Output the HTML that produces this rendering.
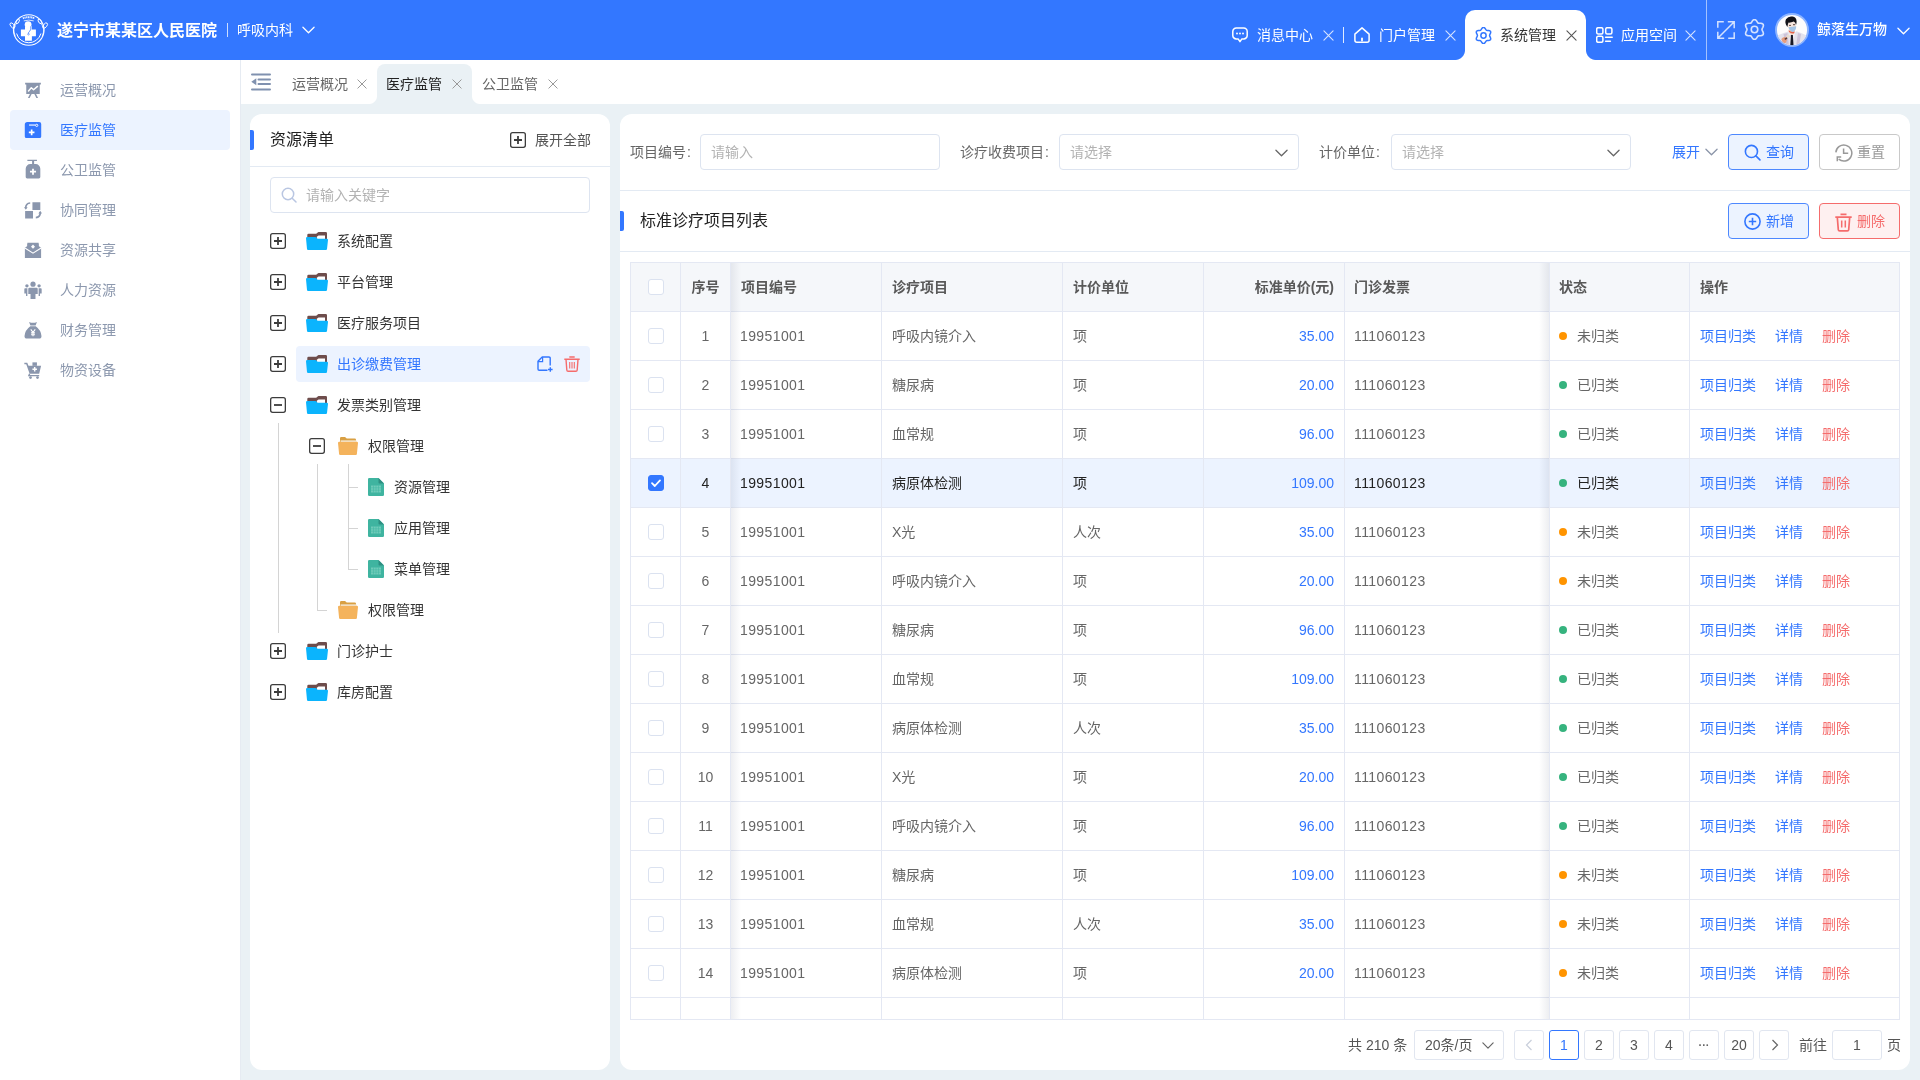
<!DOCTYPE html>
<html lang="zh-CN">
<head>
<meta charset="utf-8">
<title>系统管理 - 医疗监管</title>
<style>
*{box-sizing:border-box;margin:0;padding:0}
html,body{width:1920px;height:1080px;overflow:hidden}
body{position:relative;background:#eaf1f5;font-family:"Liberation Sans","Noto Sans CJK SC",sans-serif;font-size:14px;color:#333;line-height:20px}
.abs{position:absolute}
#hd,#sb,#tb,.panel{will-change:transform}
svg{display:block}
/* ---------- header ---------- */
#hd{position:absolute;left:0;top:0;width:1920px;height:60px;background:#3377ff;color:#fff}
#hd .logo{position:absolute;left:9px;top:11px}
#hd .title{position:absolute;left:57px;top:19px;font-size:16px;font-weight:700;line-height:24px;white-space:nowrap}
#hd .vbar{position:absolute;left:227px;top:23px;width:1px;height:14px;background:rgba(255,255,255,.75)}
#hd .dept{position:absolute;left:237px;top:20px;font-size:14px;line-height:20px;white-space:nowrap}
#hd .dchev{position:absolute;left:302px;top:26px}
.htab{position:absolute;top:10px;height:50px;width:121px;color:#fff;white-space:nowrap}
.htab .ic{position:absolute;left:10px;top:17px}
.htab .tx{position:absolute;left:35px;top:15px;line-height:20px;font-size:14px}
.htab .cx{position:absolute;left:101px;top:20px}
.htab.on{background:#fff;color:#333;border-radius:10px 10px 0 0}
.htab.on:before,.htab.on:after{content:"";position:absolute;bottom:0;width:10px;height:10px}
.htab.on:before{left:-10px;background:radial-gradient(circle at 0 0,rgba(255,255,255,0) 9.5px,#fff 10.5px)}
.htab.on:after{right:-10px;background:radial-gradient(circle at 100% 0,rgba(255,255,255,0) 9.5px,#fff 10.5px)}
#hd .sep{position:absolute;left:1706px;top:0;width:1px;height:60px;background:rgba(255,255,255,.55)}
#hd .tsep{position:absolute;left:1343px;top:27px;width:1px;height:16px;background:rgba(255,255,255,.85)}
#hd .uname{position:absolute;left:1817px;top:19px;font-size:14px;line-height:20px;font-weight:500;white-space:nowrap}
/* ---------- sidebar ---------- */
#sb{position:absolute;left:0;top:60px;width:241px;height:1020px;background:#fff;border-right:1px solid #e6ebf2}
.mi{position:absolute;left:10px;width:220px;height:40px;border-radius:4px;color:#8c98ae;white-space:nowrap}
.mi .ic{position:absolute;left:14px;top:11px}
.mi .tx{position:absolute;left:50px;top:10px;line-height:20px}
.mi.on{background:#ecf3ff;color:#3377ff}
/* ---------- tab bar ---------- */
#tb{position:absolute;left:241px;top:60px;width:1679px;height:44px;background:#fff}
.ptab{position:absolute;top:4px;height:40px;width:95px;color:#666;white-space:nowrap}
.ptab .tx{position:absolute;left:10px;top:10px;line-height:20px}
.ptab .cx{position:absolute;left:75px;top:15px}
.ptab.on{background:#eaf1f5;color:#222;border-radius:8px 8px 0 0}
.ptab.on:before,.ptab.on:after{content:"";position:absolute;bottom:0;width:8px;height:8px}
.ptab.on:before{left:-8px;background:radial-gradient(circle at 0 0,rgba(234,241,245,0) 7.5px,#eaf1f5 8.5px)}
.ptab.on:after{right:-8px;background:radial-gradient(circle at 100% 0,rgba(234,241,245,0) 7.5px,#eaf1f5 8.5px)}
/* ---------- panels ---------- */
.panel{position:absolute;background:#fff;border-radius:12px}
#lp{left:250px;top:114px;width:360px;height:956px}
#rp{left:620px;top:114px;width:1290px;height:956px}
.bluebar{position:absolute;left:0;width:4px;height:20px;background:#3377ff;border-radius:0 2px 2px 0}
.hline{position:absolute;left:0;height:1px;background:#e3eaf3}

/* ---------- left panel ---------- */
#lp .ttl{position:absolute;left:20px;top:14px;font-size:16px;line-height:24px;color:#222}
#lp .exall{position:absolute;left:285px;top:16px;color:#555;line-height:20px}
.sinp{position:absolute;left:20px;top:63px;width:320px;height:36px;border:1px solid #dde4f0;border-radius:4px;background:#fff}
.sinp span{position:absolute;left:35px;top:7px;color:#b3b3b3;line-height:20px}
.tr{position:absolute;left:0;width:360px;height:36px;white-space:nowrap}
.tr .bx{position:absolute;top:10px}
.tr .fi{position:absolute}
.tr .tx{position:absolute;top:8px;line-height:20px;color:#333}
.tr .sel{position:absolute;left:46px;top:0;width:294px;height:36px;border-radius:4px;background:#ecf3ff}
.tl{position:absolute;background:#d4d4d4}

/* ---------- right panel ---------- */
.cl{font-style:normal;margin-left:1px}
.flb{position:absolute;top:28px;line-height:20px;color:#666;white-space:nowrap}
.finp{position:absolute;top:20px;width:240px;height:36px;border:1px solid #dde4f0;border-radius:4px;background:#fff}
.finp span{position:absolute;left:10px;top:7px;line-height:20px;color:#b3b3b3}
.finp svg{position:absolute;right:10px;top:14px;color:#666}
.btn{position:absolute;width:81px;height:36px;border-radius:4px;border:1px solid #4d88ff;background:#ecf3ff;color:#3377ff;white-space:nowrap}
.btn svg{position:absolute;left:15px;top:9px}
.btn span{position:absolute;left:37px;top:7px;line-height:20px}
.btn.gray{border-color:#c9c9c9;background:#fff;color:#999}
.btn.red{border-color:#f56c6c;background:#fef0f0;color:#f56c6c}
#rp .ttl{position:absolute;left:20px;top:95px;font-size:16px;line-height:24px;color:#222}
/* table */
#tbl{position:absolute;left:10px;top:148px;width:1270px;height:758px;overflow:hidden;border:1px solid #e4e8f3;border-right:none;background:#fff}
#tbl table{border-collapse:separate;border-spacing:0;table-layout:fixed;width:1269px}
#tbl th,#tbl td{height:49px;border-right:1px solid #e4e8f3;border-bottom:1px solid #e4e8f3;padding:0 10px;text-align:left;white-space:nowrap;overflow:hidden;line-height:20px;font-size:14px}
#tbl th{background:#f5f7fa;color:#595959;font-weight:700}
#tbl th.s{padding-left:9px}
#tbl td{color:#666}
#tbl .n{letter-spacing:.4px;padding-left:9px}
#tbl .c{text-align:center;padding:0}
#tbl .r{text-align:right}
#tbl td.pr{color:#3377ff}
#tbl tr.sel td{background:#ecf3ff;color:#222}
#tbl tr.sel td.pr{color:#3377ff}
.cb{display:inline-block;width:16px;height:16px;border:1px solid #dbe2f0;border-radius:3px;background:#fff;vertical-align:middle;position:relative;top:-1px}
.cb.on{background:#3377ff;border-color:#3377ff}
.dot{display:inline-block;width:8px;height:8px;border-radius:50%;margin:0 10px 0 -1px;position:relative;top:-1px}
.dot.o{background:#ff9400}
.dot.g{background:#36b37e}
.lk{color:#3377ff;margin-right:19px}
.lk.d{color:#f56c6c;margin-right:0}
.shl{position:absolute;left:100px;top:0;width:10px;height:758px;background:linear-gradient(90deg,rgba(60,70,100,.09),rgba(60,70,100,0));pointer-events:none}
.shr{position:absolute;left:908px;top:0;width:10px;height:758px;background:linear-gradient(270deg,rgba(60,70,100,.09),rgba(60,70,100,0));pointer-events:none}
/* pagination */
#pg{position:absolute;left:0;top:916px;width:1290px;height:30px;color:#555;line-height:30px;white-space:nowrap}
#pg .pb{position:absolute;top:0;width:30px;height:30px;border:1px solid #e1e6f0;border-radius:3px;text-align:center;line-height:28px;color:#555;background:#fff}
#pg .pb.on{border-color:#3377ff;color:#3377ff}
#pg .t{position:absolute;top:0}
</style>
</head>
<body>
<!-- HEADER -->
<div id="hd">
  <svg class="logo" width="40" height="38" viewBox="0 0 40 38">
    <g fill="none" stroke="#fff">
      <circle cx="19.750" cy="19" r="15.300" stroke-width="1.100"/>
      <path d="M7.600 22.500A12.600 12.600 0 0 0 31.900 22.500" stroke-width="1"/>
      <path d="M13.800 7.300Q19.750 5 25.700 7.300" stroke-width="2" stroke-dasharray="1.200 .5" opacity=".9"/>
      <path d="M14.800 9.900Q19.750 8.300 24.700 9.900" stroke-width=".8"/>
      <ellipse cx="3.300" cy="14.500" rx="1.700" ry="3" transform="rotate(-38 3.300 14.500)" stroke-width=".9"/>
      <ellipse cx="8.700" cy="10.300" rx="1.300" ry="2.400" transform="rotate(32 8.700 10.300)" stroke-width=".9"/>
      <path d="M4.800 16.500Q4.300 21 6.300 25.500M7.600 12Q5.800 14.500 5.300 17.500" stroke-width=".8"/>
      <ellipse cx="36.200" cy="14.500" rx="1.700" ry="3" transform="rotate(38 36.200 14.500)" stroke-width=".9"/>
      <ellipse cx="30.800" cy="10.300" rx="1.300" ry="2.400" transform="rotate(-32 30.800 10.300)" stroke-width=".9"/>
      <path d="M34.700 16.500Q35.200 21 33.200 25.500M31.900 12Q33.700 14.500 34.200 17.500" stroke-width=".8"/>
    </g>
    <path d="M16 15.200h6.900v3.300h4v6.800h-4v4.400H16v-4.400h-4.100v-6.800H16Z" fill="#fff"/>
    <circle cx="19.100" cy="13.600" r="3.400" fill="#fff"/>
    <path d="M21.800 15.300Q22.600 18.500 20.600 20.300Q19.200 21.600 19.400 22.600" fill="none" stroke="#3377ff" stroke-width=".8"/>
    <circle cx="19.500" cy="23.200" r=".8" fill="#fff" stroke="#3377ff" stroke-width=".6"/>
  </svg>
    <div class="title">遂宁市某某区人民医院</div>
  <div class="vbar"></div>
  <div class="dept">呼吸内科</div>
  <svg class="dchev" width="13" height="8" viewBox="0 0 14 8"><path d="M1 1L7 7L13 1" fill="none" stroke="currentColor" stroke-width="1.4" stroke-linecap="round" stroke-linejoin="round"/></svg>
  <div class="htab" style="left:1222px">
    <svg class="ic" width="16" height="16" viewBox="0 0 16 16"><path d="M4.300 .9h7.400a3.500 3.500 0 0 1 3.500 3.500v4a3.500 3.500 0 0 1-3.500 3.500H9.900L8 14.700 6.100 11.900H4.300A3.500 3.500 0 0 1 .8 8.400V4.400A3.500 3.500 0 0 1 4.300 .9Z" fill="none" stroke="#fff" stroke-width="1.500" stroke-linejoin="round"/><circle cx="5" cy="6.500" r=".95" fill="#fff"/><circle cx="8" cy="6.500" r=".95" fill="#fff"/><circle cx="11" cy="6.500" r=".95" fill="#fff"/></svg>
    <span class="tx">消息中心</span>
    <svg class="cx" width="11" height="11" style="color:rgba(255,255,255,.8)" viewBox="0 0 12 12"><path d="M1 1L11 11M11 1L1 11" fill="none" stroke="currentColor" stroke-width="1.2" stroke-linecap="round"/></svg>
  </div>
  <div class="tsep"></div>
  <div class="htab" style="left:1344px">
    <svg class="ic" width="16" height="16" viewBox="0 0 16 16"><path d="M8 .9L15.100 7.100V13.200a2 2 0 0 1-2 2H2.900a2 2 0 0 1-2-2V7.100Z" fill="none" stroke="#fff" stroke-width="1.500" stroke-linejoin="round"/><path d="M8 11.300v2.200" stroke="#fff" stroke-width="1.800" stroke-linecap="round"/></svg>
    <span class="tx">门户管理</span>
    <svg class="cx" width="11" height="11" style="color:rgba(255,255,255,.8)" viewBox="0 0 12 12"><path d="M1 1L11 11M11 1L1 11" fill="none" stroke="currentColor" stroke-width="1.2" stroke-linecap="round"/></svg>
  </div>
  <div class="htab on" style="left:1465px">
    <svg class="ic" width="17" height="17" style="color:#3377ff;stroke-width:1.750;left:9.500px;top:16.500px" viewBox="0 0 20 20"><path d="M17.1 10.0L17.4 9.0L18.0 7.9L18.5 6.5L18.3 5.2L17.3 4.4L15.9 4.1L14.5 4.1L13.5 3.9L12.8 3.1L12.1 2.0L11.2 0.9L10.0 0.4L8.8 0.9L7.9 2.0L7.2 3.1L6.5 3.9L5.5 4.1L4.1 4.1L2.7 4.4L1.7 5.2L1.5 6.5L2.0 7.9L2.6 9.0L2.9 10.0L2.6 11.0L2.0 12.1L1.5 13.5L1.7 14.8L2.7 15.6L4.1 15.9L5.5 15.9L6.5 16.1L7.2 16.9L7.9 18.0L8.8 19.1L10.0 19.6L11.2 19.1L12.1 18.0L12.8 16.9L13.5 16.1L14.5 15.9L15.9 15.9L17.3 15.6L18.3 14.8L18.5 13.5L18.0 12.1L17.4 11.0Z" fill="none" stroke="currentColor" stroke-linejoin="round"/><circle cx="10" cy="10" r="3.1" fill="none" stroke="currentColor"/></svg>
    <span class="tx">系统管理</span>
    <svg class="cx" width="11" height="11" style="color:#555" viewBox="0 0 12 12"><path d="M1 1L11 11M11 1L1 11" fill="none" stroke="currentColor" stroke-width="1.2" stroke-linecap="round"/></svg>
  </div>
  <div class="htab" style="left:1586px">
    <svg class="ic" width="17" height="16" viewBox="0 0 17 16"><rect x=".7" y=".7" width="6.200" height="6.200" rx="1.500" fill="none" stroke="#fff" stroke-width="1.500"/><rect x="9.700" y=".7" width="6.200" height="6.200" rx="1.500" fill="none" stroke="#fff" stroke-width="1.500"/><rect x=".7" y="9.300" width="6.200" height="6" rx="1.500" fill="none" stroke="#fff" stroke-width="1.500"/><path d="M9.600 10.300h6.600M9.600 14.300h4.800" stroke="#fff" stroke-width="1.500" stroke-linecap="round"/></svg>
    <span class="tx">应用空间</span>
    <svg class="cx" width="11" height="11" style="left:99px;color:rgba(255,255,255,.8)" viewBox="0 0 12 12"><path d="M1 1L11 11M11 1L1 11" fill="none" stroke="currentColor" stroke-width="1.2" stroke-linecap="round"/></svg>
  </div>
  <svg class="abs" style="left:1717px;top:21px;color:#d4e2ff" width="18" height="18" viewBox="0 0 18 18"><path d="M.8 6.800V.8H6.800M11.200 17.200h6V11.200M10.800.8h6.400v6.400M17 1L1 17M.8 10.800v6.400h6.400" fill="none" stroke="currentColor" stroke-width="1.500"/></svg>
  <svg class="abs" style="left:1744px;top:19px;color:#d4e2ff;stroke-width:1.550" width="21" height="21" viewBox="0 0 20 20"><path d="M17.1 10.0L17.4 9.0L18.0 7.9L18.5 6.5L18.3 5.2L17.3 4.4L15.9 4.1L14.5 4.1L13.5 3.9L12.8 3.1L12.1 2.0L11.2 0.9L10.0 0.4L8.8 0.9L7.9 2.0L7.2 3.1L6.5 3.9L5.5 4.1L4.1 4.1L2.7 4.4L1.7 5.2L1.5 6.5L2.0 7.9L2.6 9.0L2.9 10.0L2.6 11.0L2.0 12.1L1.5 13.5L1.7 14.8L2.7 15.6L4.1 15.9L5.5 15.9L6.5 16.1L7.2 16.9L7.9 18.0L8.8 19.1L10.0 19.6L11.2 19.1L12.1 18.0L12.8 16.9L13.5 16.1L14.5 15.9L15.9 15.9L17.3 15.6L18.3 14.8L18.5 13.5L18.0 12.1L17.4 11.0Z" fill="none" stroke="currentColor" stroke-linejoin="round"/><circle cx="10" cy="10" r="3.1" fill="none" stroke="currentColor"/></svg>
  <svg class="abs" style="left:1775px;top:13px" width="34" height="34" viewBox="0 0 34 34">
    <clipPath id="avc"><circle cx="17" cy="17" r="15.200"/></clipPath>
    <circle cx="17" cy="17" r="16" fill="#fefcfc" stroke="#8db4ff" stroke-width="1.900"/>
    <g clip-path="url(#avc)">
      <path d="M2 34L3 22.300Q8 20 13 18.500L17 21.500L21.500 18.200Q27 20 31 22.300L32.500 34Z" fill="#e4e2ec"/>
      <path d="M8.500 21L11 33H14L12.500 20ZM23 20L21 33H24L26 21Z" fill="#c3b6d2" opacity=".7"/>
      <path d="M13.500 19L16.800 33L20.600 19Z" fill="#f1eef4"/>
      <path d="M13.700 16.500H19.600L19.400 20L16.800 22.300L14.200 20Z" fill="#f2cbb8"/>
      <path d="M13.600 17.200Q16.500 19.800 19.500 18.200L19.300 20.300Q16.300 20.800 13.800 18.800Z" fill="#e5624b"/>
      <path d="M15.900 22L17.900 22L18.500 32.500L15.300 32.500Z" fill="#191926"/>
      <path d="M12.500 9Q16 7.500 20.500 8.500Q21.500 12 20.800 15L17 17L13.200 15Z" fill="#f7e6de"/>
      <ellipse cx="15" cy="12.300" rx=".9" ry=".65" fill="#3a2320"/><ellipse cx="19" cy="11.700" rx=".9" ry=".65" fill="#3a2320"/>
      <path d="M13.400 14.300Q17.500 13.800 21.200 13.200Q21.300 17.300 18 18.900Q14.800 18.600 13.400 14.300Z" fill="#a6c5e6"/>
      <path d="M12 13.500Q9.300 9.500 11 6.200Q13.500 2.800 17.500 3.600Q21.500 4.300 21.600 8.600Q21.700 10.500 21 12Q20.600 9 18.800 8.500Q15.800 9.800 13.400 9.600Q12.800 11.500 12.600 13.800Z" fill="#131218"/>
      <circle cx="13.100" cy="23.300" r="1.800" fill="#e9dccf"/>
      <path d="M6.300 26Q8.500 23 11.800 24.500Q12.500 27 11 29.500Q9 30.500 7.500 29.500Z" fill="#e59e80"/>
      <path d="M9.500 25.500L12 24.300L12.300 25.800L10 27Z" fill="#5a3a36"/>
    </g>
  </svg>
  <svg class="abs" style="left:1897px;top:27px" width="13" height="8" viewBox="0 0 14 8"><path d="M1 1L7 7L13 1" fill="none" stroke="currentColor" stroke-width="1.4" stroke-linecap="round" stroke-linejoin="round"/></svg>
  <div class="sep"></div>
  <div class="uname">鲸落生万物</div>
</div>
<!-- SIDEBAR -->
<div id="sb">
  <div class="mi" style="top:10px"><svg class="ic" width="18" height="18" viewBox="0 0 16 16" fill="#8a96ad" style="color:#8a96ad"><path d="M1 1.500h14v1.600H1ZM2 3.100h12v8.400H2ZM5.300 11.500h1.500L5 15H3.500ZM9.200 11.500h1.500L12.500 15H11Z"/><path d="M4 8.800L6.500 6L8.500 7.800L12 4.800" fill="none" stroke="#fff" stroke-width="1.300" stroke-linejoin="round" stroke-linecap="round"/></svg><span class="tx">运营概况</span></div>
  <div class="mi on" style="top:50px"><svg class="ic" width="18" height="18" viewBox="0 0 16 16" fill="#3377ff" style="color:#3377ff"><path d="M3 .9h10.500a1.800 1.800 0 0 1 1.800 1.800V13.800a1.400 1.400 0 0 1-1.400 1.400H2.100A1.400 1.400 0 0 1 .7 13.800V3.200A2.300 2.300 0 0 1 3 .9Z"/><path d="M4.500 3.600H10.300" stroke="#fff" stroke-width="1" fill="none"/><circle cx="11.300" cy="3.900" r="1" fill="none" stroke="#fff" stroke-width=".8"/><path d="M6.800 7.600v5M4.300 10.100h5" stroke="#fff" stroke-width="1.500" fill="none"/></svg><span class="tx">医疗监管</span></div>
  <div class="mi" style="top:90px"><svg class="ic" width="18" height="18" viewBox="0 0 16 16" overflow="visible" fill="#8a96ad" style="color:#8a96ad"><path d="M3 -1.200h8.500v1.300H9v2.600h1.300a4.200 4.200 0 0 1 4.200 4.200V14.300a1.300 1.300 0 0 1-1.300 1.300H2.800a1.300 1.300 0 0 1-1.300-1.300V6.900a4.200 4.200 0 0 1 4.200-4.200H7.200V.1H3Z"/><path d="M8 6.800v5.400M5.300 9.500h5.400" stroke="#fff" stroke-width="1.600" fill="none"/></svg><span class="tx">公卫监管</span></div>
  <div class="mi" style="top:130px"><svg class="ic" width="18" height="18" viewBox="0 0 16 16" fill="#8a96ad" style="color:#8a96ad"><path d="M7.500 1h7v7h-7ZM1 8.800h7v6.700H1Z"/><path d="M1.500 6.500Q1.500 2 5.500 1.800M14.500 10Q14.500 14.500 10.500 14.700" fill="none" stroke="currentColor" stroke-width="1.500"/><path d="M0 5.500h3.200L1.600 7.800ZM16 11h-3.200L14.400 8.700Z"/></svg><span class="tx">协同管理</span></div>
  <div class="mi" style="top:170px"><svg class="ic" width="18" height="18" viewBox="0 0 16 16" fill="#8a96ad" style="color:#8a96ad"><path d="M0.800 6L3 4.500V1.500h10v3L15.200 6V15.200H0.800Z"/><path d="M3 2.500h10V8L8 11L3 8Z" fill="currentColor" stroke="#fff" stroke-width="0"/><path d="M0.800 6.200L8 10.800L15.200 6.200" fill="none" stroke="#fff" stroke-width="1"/><path d="M8 3.200L9.800 5L8 6.800L6.200 5Z" fill="#fff"/></svg><span class="tx">资源共享</span></div>
  <div class="mi" style="top:210px"><svg class="ic" width="18" height="18" viewBox="0 0 16 16" fill="#8a96ad" style="color:#8a96ad"><circle cx="8" cy="2.800" r="2.300"/><path d="M4.800 6h6.400a1 1 0 0 1 1 1v4.500h-2V16H5.800v-4.500h-2V7a1 1 0 0 1 1-1Z"/><circle cx="2.600" cy="4.300" r="1.500"/><circle cx="13.400" cy="4.300" r="1.500"/><path d="M1 6.500h2v6.800H1.800V11H.3V7.200a.7.700 0 0 1 .7-.7ZM15 6.500h-2v6.800h1.200V11h1.500V7.200a.7.700 0 0 0-.7-.7Z"/></svg><span class="tx">人力资源</span></div>
  <div class="mi" style="top:250px"><svg class="ic" width="18" height="18" viewBox="0 0 16 16" fill="#8a96ad" style="color:#8a96ad"><path d="M4.500 0.800Q8 2.300 11.500 0.800L10.300 4h-4.600ZM5.600 4.600h4.800Q15 8 15.500 13a2.200 2.200 0 0 1-2.200 2.500H2.700A2.200 2.200 0 0 1 .5 13Q1 8 5.600 4.600Z"/><path d="M6 7.500L8 10L10 7.500M8 10v3.500M6.200 10.500h3.600M6.200 12.200h3.600" fill="none" stroke="#fff" stroke-width="1"/></svg><span class="tx">财务管理</span></div>
  <div class="mi" style="top:290px"><svg class="ic" width="18" height="18" viewBox="0 0 16 16" fill="#8a96ad" style="color:#8a96ad"><path d="M0.300 1.500h2.600L4 4.300h11.200l-1.700 7H5L2 2.800H0.300Z"/><path d="M5 11.300L4.300 13h9.200" fill="none" stroke="currentColor" stroke-width="1.200"/><circle cx="5.800" cy="14.700" r="1.200"/><circle cx="12" cy="14.700" r="1.200"/><path d="M7.500 1.200h4v3.100h-4Z"/><path d="M9.500 5.300v4M7.500 7.300h4" stroke="#fff" stroke-width="1.300" fill="none"/></svg><span class="tx">物资设备</span></div>
</div>
<!-- TAB BAR -->
<div id="tb">
  <svg class="abs" style="left:10px;top:13px" width="20" height="18" viewBox="0 0 20 18"><path d="M1 1.500h18M7.500 6.500h11.500M7.500 11h11.500M1 16.500h18" stroke="#8091af" stroke-width="2" stroke-linecap="round"/><path d="M0.300 8.800L5.300 5.300v7Z" fill="#8091af"/></svg>
  <div class="ptab" style="left:41px"><span class="tx">运营概况</span><svg class="cx" width="10" height="10" style="color:#999" viewBox="0 0 12 12"><path d="M1 1L11 11M11 1L1 11" fill="none" stroke="currentColor" stroke-width="1.2" stroke-linecap="round"/></svg></div>
  <div class="ptab on" style="left:136px"><span class="tx" style="left:9px">医疗监管</span><svg class="cx" width="10" height="10" style="color:#999" viewBox="0 0 12 12"><path d="M1 1L11 11M11 1L1 11" fill="none" stroke="currentColor" stroke-width="1.2" stroke-linecap="round"/></svg></div>
  <div class="ptab" style="left:231px"><span class="tx">公卫监管</span><svg class="cx" width="10" height="10" style="left:76px;color:#999" viewBox="0 0 12 12"><path d="M1 1L11 11M11 1L1 11" fill="none" stroke="currentColor" stroke-width="1.2" stroke-linecap="round"/></svg></div>
</div>
<!-- LEFT PANEL -->
<div class="panel" id="lp">
  <div class="bluebar" style="top:16px"></div>
  <div class="ttl">资源清单</div>
  <svg class="abs" style="left:260px;top:18px" width="16" height="16" viewBox="0 0 16 16"><rect x=".65" y=".65" width="14.700" height="14.700" rx="2" fill="#fff" stroke="#3c3c3c" stroke-width="1.300"/><path d="M4 8H12M8 4V12" stroke="#3c3c3c" stroke-width="1.800" fill="none"/></svg>
  <div class="exall">展开全部</div>
  <div class="hline" style="top:52px;width:360px"></div>
  <div class="sinp"><svg class="abs" style="left:10px;top:9px;color:#b9c6e2" width="16" height="16" viewBox="0 0 16 16"><circle cx="7" cy="7" r="5.700" fill="none" stroke="currentColor" stroke-width="1.500"/><path d="M11.200 11.200L15 15" stroke="currentColor" stroke-width="1.500" stroke-linecap="round"/></svg><span>请输入关键字</span></div>
  <div class="tl" style="left:28px;top:309px;width:1px;height:210px"></div>
  <div class="tl" style="left:67px;top:350px;width:1px;height:147px"></div>
  <div class="tl" style="left:67px;top:496px;width:10px;height:1px"></div>
  <div class="tl" style="left:98px;top:350px;width:1px;height:106px"></div>
  <div class="tl" style="left:98px;top:373px;width:10px;height:1px"></div>
  <div class="tl" style="left:98px;top:414px;width:10px;height:1px"></div>
  <div class="tl" style="left:98px;top:455px;width:10px;height:1px"></div>
  <div class="tr" style="top:109px"><svg class="bx" style="left:20px" width="16" height="16" viewBox="0 0 16 16"><rect x=".65" y=".65" width="14.700" height="14.700" rx="2" fill="#fff" stroke="#3c3c3c" stroke-width="1.300"/><path d="M4 8H12M8 4V12" stroke="#3c3c3c" stroke-width="1.800" fill="none"/></svg><svg class="fi" style="left:56px;top:9px" width="22" height="18" viewBox="0 0 22 18"><path d="M1.300 3A1.200 1.200 0 0 1 2.500 1.800H10.200L11.700.4a1.200 1.200 0 0 1 .8-.3H19.800A1.200 1.200 0 0 1 21 1.300V9H1.300Z" fill="#6e4d4c"/><path d="M10.800 4.800L12.500 3.600H19V8H10.800Z" fill="#fff"/><path d="M0 6.200A1.200 1.200 0 0 1 1.200 5H9.200a1.400 1.400 0 0 1 .9.350L11.300 6.450a1.400 1.400 0 0 0 .9.350H20.900a1.100 1.100 0 0 1 1.100 1.200L21 17a1.100 1.100 0 0 1-1.100 1H2.100A1.100 1.100 0 0 1 1 17Z" fill="#0bb4fd"/></svg><span class="tx" style="left:87px">系统配置</span></div>
  <div class="tr" style="top:150px"><svg class="bx" style="left:20px" width="16" height="16" viewBox="0 0 16 16"><rect x=".65" y=".65" width="14.700" height="14.700" rx="2" fill="#fff" stroke="#3c3c3c" stroke-width="1.300"/><path d="M4 8H12M8 4V12" stroke="#3c3c3c" stroke-width="1.800" fill="none"/></svg><svg class="fi" style="left:56px;top:9px" width="22" height="18" viewBox="0 0 22 18"><path d="M1.300 3A1.200 1.200 0 0 1 2.500 1.800H10.200L11.700.4a1.200 1.200 0 0 1 .8-.3H19.800A1.200 1.200 0 0 1 21 1.300V9H1.300Z" fill="#6e4d4c"/><path d="M10.800 4.800L12.500 3.600H19V8H10.800Z" fill="#fff"/><path d="M0 6.200A1.200 1.200 0 0 1 1.200 5H9.200a1.400 1.400 0 0 1 .9.350L11.300 6.450a1.400 1.400 0 0 0 .9.350H20.900a1.100 1.100 0 0 1 1.100 1.200L21 17a1.100 1.100 0 0 1-1.100 1H2.100A1.100 1.100 0 0 1 1 17Z" fill="#0bb4fd"/></svg><span class="tx" style="left:87px">平台管理</span></div>
  <div class="tr" style="top:191px"><svg class="bx" style="left:20px" width="16" height="16" viewBox="0 0 16 16"><rect x=".65" y=".65" width="14.700" height="14.700" rx="2" fill="#fff" stroke="#3c3c3c" stroke-width="1.300"/><path d="M4 8H12M8 4V12" stroke="#3c3c3c" stroke-width="1.800" fill="none"/></svg><svg class="fi" style="left:56px;top:9px" width="22" height="18" viewBox="0 0 22 18"><path d="M1.300 3A1.200 1.200 0 0 1 2.500 1.800H10.200L11.700.4a1.200 1.200 0 0 1 .8-.3H19.800A1.200 1.200 0 0 1 21 1.300V9H1.300Z" fill="#6e4d4c"/><path d="M10.800 4.800L12.500 3.600H19V8H10.800Z" fill="#fff"/><path d="M0 6.200A1.200 1.200 0 0 1 1.200 5H9.200a1.400 1.400 0 0 1 .9.350L11.300 6.450a1.400 1.400 0 0 0 .9.350H20.900a1.100 1.100 0 0 1 1.100 1.200L21 17a1.100 1.100 0 0 1-1.100 1H2.100A1.100 1.100 0 0 1 1 17Z" fill="#0bb4fd"/></svg><span class="tx" style="left:87px">医疗服务项目</span></div>
  <div class="tr" style="top:232px"><div class="sel"></div><svg class="bx" style="left:20px" width="16" height="16" viewBox="0 0 16 16"><rect x=".65" y=".65" width="14.700" height="14.700" rx="2" fill="#fff" stroke="#3c3c3c" stroke-width="1.300"/><path d="M4 8H12M8 4V12" stroke="#3c3c3c" stroke-width="1.800" fill="none"/></svg><svg class="fi" style="left:56px;top:9px" width="22" height="18" viewBox="0 0 22 18"><path d="M1.300 3A1.200 1.200 0 0 1 2.500 1.800H10.200L11.700.4a1.200 1.200 0 0 1 .8-.3H19.800A1.200 1.200 0 0 1 21 1.300V9H1.300Z" fill="#6e4d4c"/><path d="M10.800 4.800L12.500 3.600H19V8H10.800Z" fill="#fff"/><path d="M0 6.200A1.200 1.200 0 0 1 1.200 5H9.200a1.400 1.400 0 0 1 .9.350L11.300 6.450a1.400 1.400 0 0 0 .9.350H20.900a1.100 1.100 0 0 1 1.100 1.200L21 17a1.100 1.100 0 0 1-1.100 1H2.100A1.100 1.100 0 0 1 1 17Z" fill="#0bb4fd"/></svg><span class="tx" style="left:87px;color:#3377ff">出诊缴费管理</span><svg class="abs" style="left:287px;top:10px" width="16" height="16" viewBox="0 0 16 16"><path d="M10.500 14.200H2.200a1.200 1.200 0 0 1-1.200-1.200V5.200L5.200 1H12a1.200 1.200 0 0 1 1.200 1.200V9.500" fill="none" stroke="#3377ff" stroke-width="1.400" stroke-linejoin="round"/><path d="M1 5.600H5.600V1" fill="none" stroke="#3377ff" stroke-width="1.200"/><path d="M13.300 11.200V15.800M11 13.500H15.600" stroke="#3377ff" stroke-width="1.400" fill="none"/></svg><svg class="abs" style="left:314px;top:10px" width="16" height="16" viewBox="0 0 16 16"><path d="M.3 3.300H15.700M5.300 1H10.700" fill="none" stroke="#f56c6c" stroke-width="1.400"/><path d="M2 3.300L2.800 14a1.300 1.300 0 0 0 1.300 1.200H11.900A1.300 1.300 0 0 0 13.200 14L14 3.300" fill="none" stroke="#f56c6c" stroke-width="1.400"/><path d="M5.700 6V12.600M8 6V12.600M10.300 6V12.600" stroke="#f56c6c" stroke-width="1.100" fill="none"/></svg></div>
  <div class="tr" style="top:273px"><svg class="bx" style="left:20px" width="16" height="16" viewBox="0 0 16 16"><rect x=".65" y=".65" width="14.700" height="14.700" rx="2" fill="#fff" stroke="#3c3c3c" stroke-width="1.300"/><path d="M4 8H12" stroke="#3c3c3c" stroke-width="1.800" fill="none"/></svg><svg class="fi" style="left:56px;top:9px" width="22" height="18" viewBox="0 0 22 18"><path d="M1.300 3A1.200 1.200 0 0 1 2.500 1.800H10.200L11.700.4a1.200 1.200 0 0 1 .8-.3H19.800A1.200 1.200 0 0 1 21 1.300V9H1.300Z" fill="#6e4d4c"/><path d="M10.800 4.800L12.500 3.600H19V8H10.800Z" fill="#fff"/><path d="M0 6.200A1.200 1.200 0 0 1 1.200 5H9.200a1.400 1.400 0 0 1 .9.350L11.300 6.450a1.400 1.400 0 0 0 .9.350H20.900a1.100 1.100 0 0 1 1.100 1.200L21 17a1.100 1.100 0 0 1-1.100 1H2.100A1.100 1.100 0 0 1 1 17Z" fill="#0bb4fd"/></svg><span class="tx" style="left:87px">发票类别管理</span></div>
  <div class="tr" style="top:314px"><svg class="bx" style="left:59px" width="16" height="16" viewBox="0 0 16 16"><rect x=".65" y=".65" width="14.700" height="14.700" rx="2" fill="#fff" stroke="#3c3c3c" stroke-width="1.300"/><path d="M4 8H12" stroke="#3c3c3c" stroke-width="1.800" fill="none"/></svg><svg class="fi" style="left:88px;top:9px" width="20" height="18" viewBox="0 0 20 18"><path d="M2 1.200A1.200 1.200 0 0 1 3.200 0H6.800a1.200 1.200 0 0 1 .9.400L8.700 1.500H16.800A1.200 1.200 0 0 1 18 2.700V8H2Z" fill="#d9a043"/><path d="M2.600 3.400H18.600V8H2.600Z" fill="#f3ece0"/><path d="M0 6A1.200 1.200 0 0 1 1.200 4.800H18.800A1.200 1.200 0 0 1 20 6.100L18.900 17a1.100 1.100 0 0 1-1.100 1H2.200A1.100 1.100 0 0 1 1.100 17Z" fill="#f4b35c"/></svg><span class="tx" style="left:118px">权限管理</span></div>
  <div class="tr" style="top:355px"><svg class="fi" style="left:118px;top:9px" width="16" height="18" viewBox="0 0 16 18"><path d="M1.200 0H10.500L16 5.500V16.800A1.200 1.200 0 0 1 14.800 18H1.200A1.200 1.200 0 0 1 0 16.800V1.200A1.200 1.200 0 0 1 1.200 0Z" fill="#3fb4a0"/><path d="M10.500 0L16 5.500H11.500A1 1 0 0 1 10.500 4.500Z" fill="#2e8f82"/><path d="M3 7.500H13V14.500H3Z" fill="#6fcbb9"/><path d="M3 9.800H13M3 12.200H13M5.500 7.500V14.500M8 7.500V14.500M10.500 7.500V14.500" stroke="#3fb4a0" stroke-width=".5" fill="none"/></svg><span class="tx" style="left:144px">资源管理</span></div>
  <div class="tr" style="top:396px"><svg class="fi" style="left:118px;top:9px" width="16" height="18" viewBox="0 0 16 18"><path d="M1.200 0H10.500L16 5.500V16.800A1.200 1.200 0 0 1 14.800 18H1.200A1.200 1.200 0 0 1 0 16.800V1.200A1.200 1.200 0 0 1 1.200 0Z" fill="#3fb4a0"/><path d="M10.500 0L16 5.500H11.500A1 1 0 0 1 10.500 4.500Z" fill="#2e8f82"/><path d="M3 7.500H13V14.500H3Z" fill="#6fcbb9"/><path d="M3 9.800H13M3 12.200H13M5.500 7.500V14.500M8 7.500V14.500M10.500 7.500V14.500" stroke="#3fb4a0" stroke-width=".5" fill="none"/></svg><span class="tx" style="left:144px">应用管理</span></div>
  <div class="tr" style="top:437px"><svg class="fi" style="left:118px;top:9px" width="16" height="18" viewBox="0 0 16 18"><path d="M1.200 0H10.500L16 5.500V16.800A1.200 1.200 0 0 1 14.800 18H1.200A1.200 1.200 0 0 1 0 16.800V1.200A1.200 1.200 0 0 1 1.200 0Z" fill="#3fb4a0"/><path d="M10.500 0L16 5.500H11.500A1 1 0 0 1 10.500 4.500Z" fill="#2e8f82"/><path d="M3 7.500H13V14.500H3Z" fill="#6fcbb9"/><path d="M3 9.800H13M3 12.200H13M5.500 7.500V14.500M8 7.500V14.500M10.500 7.500V14.500" stroke="#3fb4a0" stroke-width=".5" fill="none"/></svg><span class="tx" style="left:144px">菜单管理</span></div>
  <div class="tr" style="top:478px"><svg class="fi" style="left:88px;top:9px" width="20" height="18" viewBox="0 0 20 18"><path d="M2 1.200A1.200 1.200 0 0 1 3.200 0H6.800a1.200 1.200 0 0 1 .9.400L8.700 1.500H16.800A1.200 1.200 0 0 1 18 2.700V8H2Z" fill="#d9a043"/><path d="M2.600 3.400H18.600V8H2.600Z" fill="#f3ece0"/><path d="M0 6A1.200 1.200 0 0 1 1.200 4.800H18.800A1.200 1.200 0 0 1 20 6.100L18.900 17a1.100 1.100 0 0 1-1.100 1H2.200A1.100 1.100 0 0 1 1.100 17Z" fill="#f4b35c"/></svg><span class="tx" style="left:118px">权限管理</span></div>
  <div class="tr" style="top:519px"><svg class="bx" style="left:20px" width="16" height="16" viewBox="0 0 16 16"><rect x=".65" y=".65" width="14.700" height="14.700" rx="2" fill="#fff" stroke="#3c3c3c" stroke-width="1.300"/><path d="M4 8H12M8 4V12" stroke="#3c3c3c" stroke-width="1.800" fill="none"/></svg><svg class="fi" style="left:56px;top:9px" width="22" height="18" viewBox="0 0 22 18"><path d="M1.300 3A1.200 1.200 0 0 1 2.500 1.800H10.200L11.700.4a1.200 1.200 0 0 1 .8-.3H19.800A1.200 1.200 0 0 1 21 1.300V9H1.300Z" fill="#6e4d4c"/><path d="M10.800 4.800L12.500 3.600H19V8H10.800Z" fill="#fff"/><path d="M0 6.200A1.200 1.200 0 0 1 1.200 5H9.200a1.400 1.400 0 0 1 .9.350L11.300 6.450a1.400 1.400 0 0 0 .9.350H20.900a1.100 1.100 0 0 1 1.100 1.200L21 17a1.100 1.100 0 0 1-1.100 1H2.100A1.100 1.100 0 0 1 1 17Z" fill="#0bb4fd"/></svg><span class="tx" style="left:87px">门诊护士</span></div>
  <div class="tr" style="top:560px"><svg class="bx" style="left:20px" width="16" height="16" viewBox="0 0 16 16"><rect x=".65" y=".65" width="14.700" height="14.700" rx="2" fill="#fff" stroke="#3c3c3c" stroke-width="1.300"/><path d="M4 8H12M8 4V12" stroke="#3c3c3c" stroke-width="1.800" fill="none"/></svg><svg class="fi" style="left:56px;top:9px" width="22" height="18" viewBox="0 0 22 18"><path d="M1.300 3A1.200 1.200 0 0 1 2.500 1.800H10.200L11.700.4a1.200 1.200 0 0 1 .8-.3H19.800A1.200 1.200 0 0 1 21 1.300V9H1.300Z" fill="#6e4d4c"/><path d="M10.800 4.800L12.500 3.600H19V8H10.800Z" fill="#fff"/><path d="M0 6.200A1.200 1.200 0 0 1 1.200 5H9.200a1.400 1.400 0 0 1 .9.350L11.300 6.450a1.400 1.400 0 0 0 .9.350H20.900a1.100 1.100 0 0 1 1.100 1.200L21 17a1.100 1.100 0 0 1-1.100 1H2.100A1.100 1.100 0 0 1 1 17Z" fill="#0bb4fd"/></svg><span class="tx" style="left:87px">库房配置</span></div>
</div>
<!-- RIGHT PANEL -->
<div class="panel" id="rp">
  <span class="flb" style="left:10px">项目编号<i class="cl">:</i></span>
  <div class="finp" style="left:80px"><span>请输入</span></div>
  <span class="flb" style="left:340px">诊疗收费项目<i class="cl">:</i></span>
  <div class="finp" style="left:439px"><span>请选择</span><svg width="13" height="8" viewBox="0 0 14 8"><path d="M1 1L7 7L13 1" fill="none" stroke="currentColor" stroke-width="1.4" stroke-linecap="round" stroke-linejoin="round"/></svg></div>
  <span class="flb" style="left:699px">计价单位<i class="cl">:</i></span>
  <div class="finp" style="left:771px"><span>请选择</span><svg width="13" height="8" viewBox="0 0 14 8"><path d="M1 1L7 7L13 1" fill="none" stroke="currentColor" stroke-width="1.4" stroke-linecap="round" stroke-linejoin="round"/></svg></div>
  <span class="flb" style="left:1052px;color:#3377ff">展开</span>
  <svg class="abs" style="left:1085px;top:34px;color:#8a94a8" width="13" height="8" viewBox="0 0 14 8"><path d="M1 1L7 7L13 1" fill="none" stroke="currentColor" stroke-width="1.4" stroke-linecap="round" stroke-linejoin="round"/></svg>
  <div class="btn" style="left:1108px;top:20px"><svg width="17" height="17" viewBox="0 0 16 16"><circle cx="7" cy="7" r="5.700" fill="none" stroke="currentColor" stroke-width="1.500"/><path d="M11.200 11.200L15 15" stroke="currentColor" stroke-width="1.500" stroke-linecap="round"/></svg><span>查询</span></div>
  <div class="btn gray" style="left:1199px;top:20px"><svg style="left:14.500px;top:8.500px" width="18" height="18" viewBox="0 0 18 18"><path d="M.85 8.400A8 8 0 1 1 3.700 15.200" fill="none" stroke="currentColor" stroke-width="1.500"/><path d="M6.200 13H2.300V17.200" fill="none" stroke="currentColor" stroke-width="1.500"/><path d="M8.600 4.500V9.200H13.200" fill="none" stroke="currentColor" stroke-width="1.500"/></svg><span>重置</span></div>
  <div class="hline" style="top:76px;width:1290px"></div>
  <div class="bluebar" style="top:97px"></div>
  <div class="ttl">标准诊疗项目列表</div>
  <div class="btn" style="left:1108px;top:89px"><svg width="17" height="17" viewBox="0 0 17 17"><circle cx="8.500" cy="8.500" r="7.600" fill="none" stroke="currentColor" stroke-width="1.600"/><path d="M4.800 8.500H12.200M8.500 4.800V12.200" stroke="currentColor" stroke-width="1.600" fill="none"/></svg><span>新增</span></div>
  <div class="btn red" style="left:1199px;top:89px"><svg style="left:15px;top:8.500px" width="17" height="19" viewBox="0 0 17 19"><path d="M5.500 1.300H11.500M.3 4.200H16.700" fill="none" stroke="currentColor" stroke-width="1.700"/><path d="M2.300 4.200L3.300 16.600a1.400 1.400 0 0 0 1.400 1.300H12.300a1.400 1.400 0 0 0 1.400-1.300L14.700 4.200" fill="none" stroke="currentColor" stroke-width="1.700"/><path d="M6.700 7.500V14.500M10.300 7.500V14.500" stroke="currentColor" stroke-width="1.500" fill="none"/></svg><span>删除</span></div>
  <div class="hline" style="top:137px;width:1290px"></div>
  <div id="tbl"><table><colgroup><col style="width:50px"><col style="width:50px"><col style="width:151px"><col style="width:181px"><col style="width:141px"><col style="width:141px"><col style="width:205px"><col style="width:140px"><col style="width:210px"></colgroup>
<thead><tr><th class="c"><i class="cb"></i></th><th class="c">序号</th><th>项目编号</th><th>诊疗项目</th><th>计价单位</th><th class="r">标准单价(元)</th><th class="s">门诊发票</th><th class="s">状态</th><th>操作</th></tr></thead><tbody>
<tr><td class="c"><i class="cb"></i></td><td class="c">1</td><td class="n">19951001</td><td>呼吸内镜介入</td><td>项</td><td class="r pr">35.00</td><td class="n">111060123</td><td><i class="dot o"></i>未归类</td><td><span class="lk">项目归类</span><span class="lk">详情</span><span class="lk d">删除</span></td></tr>
<tr><td class="c"><i class="cb"></i></td><td class="c">2</td><td class="n">19951001</td><td>糖尿病</td><td>项</td><td class="r pr">20.00</td><td class="n">111060123</td><td><i class="dot g"></i>已归类</td><td><span class="lk">项目归类</span><span class="lk">详情</span><span class="lk d">删除</span></td></tr>
<tr><td class="c"><i class="cb"></i></td><td class="c">3</td><td class="n">19951001</td><td>血常规</td><td>项</td><td class="r pr">96.00</td><td class="n">111060123</td><td><i class="dot g"></i>已归类</td><td><span class="lk">项目归类</span><span class="lk">详情</span><span class="lk d">删除</span></td></tr>
<tr class="sel"><td class="c"><i class="cb on"><svg style="position:absolute;left:1px;top:1px" width="12" height="12" viewBox="0 0 12 12"><path d="M2 6.200L4.800 9L10 3.400" fill="none" stroke="#fff" stroke-width="1.800" stroke-linecap="round" stroke-linejoin="round"/></svg></i></td><td class="c">4</td><td class="n">19951001</td><td>病原体检测</td><td>项</td><td class="r pr">109.00</td><td class="n">111060123</td><td><i class="dot g"></i>已归类</td><td><span class="lk">项目归类</span><span class="lk">详情</span><span class="lk d">删除</span></td></tr>
<tr><td class="c"><i class="cb"></i></td><td class="c">5</td><td class="n">19951001</td><td>X光</td><td>人次</td><td class="r pr">35.00</td><td class="n">111060123</td><td><i class="dot o"></i>未归类</td><td><span class="lk">项目归类</span><span class="lk">详情</span><span class="lk d">删除</span></td></tr>
<tr><td class="c"><i class="cb"></i></td><td class="c">6</td><td class="n">19951001</td><td>呼吸内镜介入</td><td>项</td><td class="r pr">20.00</td><td class="n">111060123</td><td><i class="dot o"></i>未归类</td><td><span class="lk">项目归类</span><span class="lk">详情</span><span class="lk d">删除</span></td></tr>
<tr><td class="c"><i class="cb"></i></td><td class="c">7</td><td class="n">19951001</td><td>糖尿病</td><td>项</td><td class="r pr">96.00</td><td class="n">111060123</td><td><i class="dot g"></i>已归类</td><td><span class="lk">项目归类</span><span class="lk">详情</span><span class="lk d">删除</span></td></tr>
<tr><td class="c"><i class="cb"></i></td><td class="c">8</td><td class="n">19951001</td><td>血常规</td><td>项</td><td class="r pr">109.00</td><td class="n">111060123</td><td><i class="dot g"></i>已归类</td><td><span class="lk">项目归类</span><span class="lk">详情</span><span class="lk d">删除</span></td></tr>
<tr><td class="c"><i class="cb"></i></td><td class="c">9</td><td class="n">19951001</td><td>病原体检测</td><td>人次</td><td class="r pr">35.00</td><td class="n">111060123</td><td><i class="dot g"></i>已归类</td><td><span class="lk">项目归类</span><span class="lk">详情</span><span class="lk d">删除</span></td></tr>
<tr><td class="c"><i class="cb"></i></td><td class="c">10</td><td class="n">19951001</td><td>X光</td><td>项</td><td class="r pr">20.00</td><td class="n">111060123</td><td><i class="dot g"></i>已归类</td><td><span class="lk">项目归类</span><span class="lk">详情</span><span class="lk d">删除</span></td></tr>
<tr><td class="c"><i class="cb"></i></td><td class="c">11</td><td class="n">19951001</td><td>呼吸内镜介入</td><td>项</td><td class="r pr">96.00</td><td class="n">111060123</td><td><i class="dot g"></i>已归类</td><td><span class="lk">项目归类</span><span class="lk">详情</span><span class="lk d">删除</span></td></tr>
<tr><td class="c"><i class="cb"></i></td><td class="c">12</td><td class="n">19951001</td><td>糖尿病</td><td>项</td><td class="r pr">109.00</td><td class="n">111060123</td><td><i class="dot o"></i>未归类</td><td><span class="lk">项目归类</span><span class="lk">详情</span><span class="lk d">删除</span></td></tr>
<tr><td class="c"><i class="cb"></i></td><td class="c">13</td><td class="n">19951001</td><td>血常规</td><td>人次</td><td class="r pr">35.00</td><td class="n">111060123</td><td><i class="dot o"></i>未归类</td><td><span class="lk">项目归类</span><span class="lk">详情</span><span class="lk d">删除</span></td></tr>
<tr><td class="c"><i class="cb"></i></td><td class="c">14</td><td class="n">19951001</td><td>病原体检测</td><td>项</td><td class="r pr">20.00</td><td class="n">111060123</td><td><i class="dot o"></i>未归类</td><td><span class="lk">项目归类</span><span class="lk">详情</span><span class="lk d">删除</span></td></tr>
<tr><td></td><td></td><td></td><td></td><td></td><td></td><td></td><td></td><td></td></tr>
</tbody></table><div class="shl"></div><div class="shr"></div></div>
  <div id="pg"><span class="t" style="left:728px">共 210 条</span>
<div class="pb" style="left:794px;width:90px;text-align:left;padding-left:10px">20条/页<svg class="abs" style="left:67px;top:11px;color:#666" width="12" height="7" viewBox="0 0 14 8"><path d="M1 1L7 7L13 1" fill="none" stroke="currentColor" stroke-width="1.4" stroke-linecap="round" stroke-linejoin="round"/></svg></div>
<div class="pb" style="left:894px"><svg class="abs" style="left:10px;top:8px" width="8" height="12" viewBox="0 0 8 12"><path d="M6.500 1L1.500 6L6.500 11" fill="none" stroke="#c9cfdb" stroke-width="1.200"/></svg></div>
<div class="pb on" style="left:929px">1</div>
<div class="pb" style="left:964px">2</div>
<div class="pb" style="left:999px">3</div>
<div class="pb" style="left:1034px">4</div>
<div class="pb" style="left:1069px;font-size:11px;font-weight:700;letter-spacing:0;color:#666">···</div>
<div class="pb" style="left:1104px">20</div>
<div class="pb" style="left:1139px"><svg class="abs" style="left:11px;top:8px" width="8" height="12" viewBox="0 0 8 12"><path d="M1.500 1L6.500 6L1.500 11" fill="none" stroke="#666" stroke-width="1.200"/></svg></div>
<span class="t" style="left:1179px">前往</span>
<div class="pb" style="left:1212px;width:50px">1</div>
<span class="t" style="left:1267px">页</span></div>
</div>
</body>
</html>
